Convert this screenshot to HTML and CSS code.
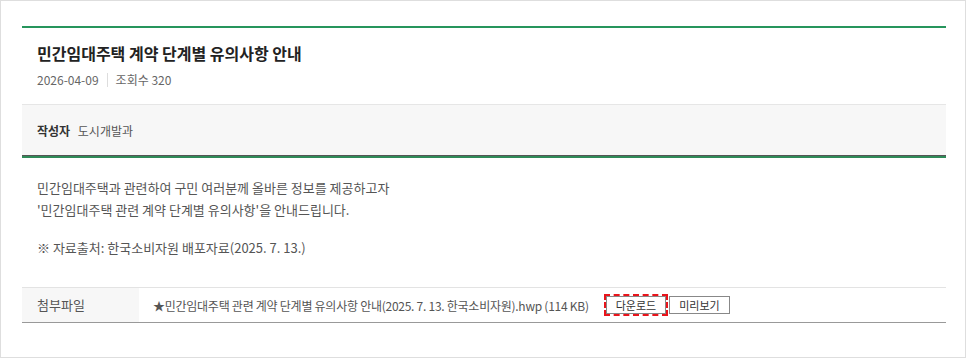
FILE: index.html
```html
<!DOCTYPE html>
<html>
<head>
    <title>민간임대주택 계약 단계별 유의사항 안내</title>
    <link rel="stylesheet" href="styles.css">
</head>
<body>
    <div class="board">
        <div class="view-head">
            <h2 class="title">민간임대주택 계약 단계별 유의사항 안내</h2>
            <div class="meta">
                <span class="date">2026-04-09</span>
                <span class="hits">조회수 320</span>
            </div>
        </div>

        <div class="writer">
            <strong>작성자</strong>
            <span>도시개발과</span>
        </div>

        <div class="view-body">
            <p>민간임대주택과 관련하여 구민 여러분께 올바른 정보를 제공하고자<br>
            '민간임대주택 관련 계약 단계별 유의사항'을 안내드립니다.</p>
            <p>※ 자료출처: 한국소비자원 배포자료(2025. 7. 13.)</p>
        </div>

        <div class="files">
            <div class="files-label">첨부파일</div>
            <div class="files-item">
                <span class="file-name">★민간임대주택 관련 계약 단계별 유의사항 안내(2025. 7. 13. 한국소비자원).hwp (114 KB)</span>
                <button class="btn btn-focus">다운로드</button>
                <button class="btn">미리보기</button>
            </div>
        </div>
    </div>
</body>
</html>
```
FILE: styles.css
```css
body { margin: 0; font-family: "Noto Sans CJK KR", "Noto Sans", sans-serif; color: #333; background: #fff; }
.board { border: 1px solid #dedede; height: 358px; box-sizing: border-box; padding: 25px 19px 0 21px; }
.view-head { border-top: 2px solid #26955c; padding: 13px 15px 14px; }
.title { margin: 0; font-size: 16px; line-height: 24px; font-weight: bold; color: #222; }
.meta { margin-top: 5px; font-size: 12px; line-height: 20px; color: #666; display: flex; align-items: center; }
.meta .date { padding-right: 8px; margin-right: 8px; border-right: 1px solid #ddd; line-height: 14px; }
.writer { background: #f7f7f7; border-top: 1px solid #e6e6e6; border-bottom: 2px solid #2f8a58; box-shadow: inset 0 -1px 0 #555; padding: 16px 15px 15px; font-size: 12px; line-height: 20px; color: #555; }
.writer strong { color: #333; margin-right: 5px; }
.view-body { padding: 19px 15px 28px; font-size: 13px; line-height: 22px; color: #555; }
.view-body p { margin: 0 0 16px; }
.view-body p:last-child { margin-bottom: 0; }
.files { display: flex; border-top: 1px solid #e3e3e3; border-bottom: 1px solid #999; font-size: 13px; color: #555; }
.files-label { width: 117px; box-sizing: border-box; background: #f7f7f7; padding: 7px 15px; line-height: 20px; display: flex; align-items: center; }
.files-item { display: flex; align-items: center; padding: 0 14px; height: 34px; }
.file-name { font-size: 12px; letter-spacing: -0.26px; margin-right: 17px; white-space: nowrap; }
.btn { font-family: inherit; font-size: 11px; color: #333; background: #fff; border: 1px solid #888; height: 18px; padding: 0 9px; line-height: 16px; margin-right: 3px; white-space: nowrap; }
.btn-focus { outline: 2px dashed #e8141b; outline-offset: 0; }
```
